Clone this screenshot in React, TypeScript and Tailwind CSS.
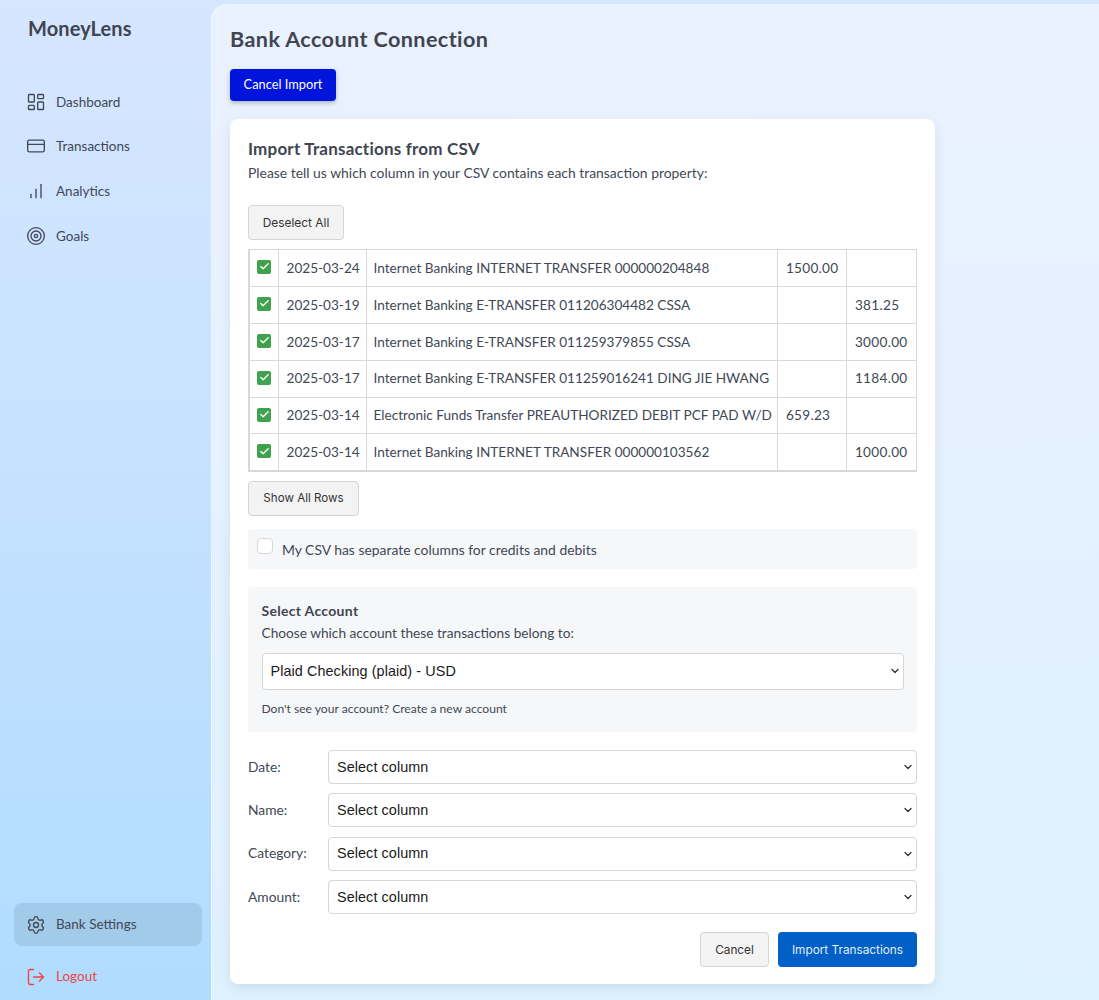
import { LayoutDashboard, CreditCard, Target, Settings, LogOut, ChevronDown, Check } from "lucide-react";

function BarsIcon({ size, strokeWidth }: { size: number; strokeWidth: number }) {
  return (
    <svg width={size} height={size} viewBox="0 0 24 24" fill="none" stroke="currentColor" strokeWidth={strokeWidth} strokeLinecap="round" strokeLinejoin="round">
      <path d="M6 20v-4" />
      <path d="M12 20V10" />
      <path d="M18 20V4" />
    </svg>
  );
}

const nav = [
  { label: "Dashboard", Icon: LayoutDashboard },
  { label: "Transactions", Icon: CreditCard },
  { label: "Analytics", Icon: BarsIcon },
  { label: "Goals", Icon: Target },
];

const rows = [
  ["2025-03-24", "Internet Banking INTERNET TRANSFER 000000204848", "1500.00", ""],
  ["2025-03-19", "Internet Banking E-TRANSFER 011206304482 CSSA", "", "381.25"],
  ["2025-03-17", "Internet Banking E-TRANSFER 011259379855 CSSA", "", "3000.00"],
  ["2025-03-17", "Internet Banking E-TRANSFER 011259016241 DING JIE HWANG", "", "1184.00"],
  ["2025-03-14", "Electronic Funds Transfer PREAUTHORIZED DEBIT PCF PAD W/D", "659.23", ""],
  ["2025-03-14", "Internet Banking INTERNET TRANSFER 000000103562", "", "1000.00"],
];

function NativeLikeSelect({ value, className }: { value: string; className: string }) {
  return (
    <div className={`relative ${className}`}>
      <select
        defaultValue={value}
        className="h-full w-full appearance-none rounded-[4px] border border-[#d5d5d5] bg-white px-2 pt-[1px] font-['Liberation_Sans',sans-serif] text-[14.4px] tracking-[0.08px] text-[#1a1a1a]"
      >
        <option>{value}</option>
      </select>
      <ChevronDown size={12} strokeWidth={2.6} className="pointer-events-none absolute right-[3px] top-1/2 -translate-y-1/2 text-[#333]" />
    </div>
  );
}

function Field({ label }: { label: string }) {
  return (
    <div className="flex h-[34px] items-center">
      <span className="w-[80px] text-[13.8px] text-[#414855]">{label}</span>
      <NativeLikeSelect value="Select column" className="h-full flex-1" />
    </div>
  );
}

export default function App() {
  return (
    <div className="flex h-[1000px] overflow-hidden bg-gradient-to-b from-[#d7e6ff] to-[#b0dcff] font-['Lato',sans-serif] text-[#414855]">
      <aside className="flex w-[211px] shrink-0 flex-col pl-[14px] pr-[9px]">
        <div className="mb-[39.2px] mt-[15px] px-[14px] text-[20px] font-bold leading-[26px] tracking-[0.1px] text-[#3f4551]">MoneyLens</div>
        <nav className="flex flex-col gap-[1.7px]">
          {nav.map(({ label, Icon }) => (
            <div key={label} className="flex h-[43px] items-center gap-[10px] px-[12px] text-[13.5px]">
              <Icon size={20} strokeWidth={1.6} />
              <span>{label}</span>
            </div>
          ))}
        </nav>
        <div className="mt-auto flex h-[43px] items-center gap-[10px] rounded-[8px] bg-[#a2cbe9] px-[12px] text-[13.5px]">
          <Settings size={20} strokeWidth={1.6} />
          <span>Bank Settings</span>
        </div>
        <div className="mb-[2px] mt-[9px] flex h-[43px] items-center gap-[10px] px-[12px] text-[13.5px] text-[#ef4444]">
          <LogOut size={20} strokeWidth={1.6} />
          <span>Logout</span>
        </div>
      </aside>

      <main className="mt-[4px] flex-1 rounded-tl-[16px] border-l border-t border-[#f0f6ff] bg-gradient-to-b from-[#eaf1ff] to-[#def1ff] pl-[18px] pt-[19px]">
        <h1 className="text-[21.6px] font-bold leading-[30px] tracking-[0.4px] text-[#3f4551]">Bank Account Connection</h1>
        <button className="mt-[15px] block h-[32px] w-[106px] rounded-[4px] bg-[#0014dc] text-[12.8px] text-white shadow-[0_2px_4px_rgba(0,0,0,0.25)]">Cancel Import</button>

        <section className="mt-[18px] h-[865px] w-[705px] rounded-[8px] bg-white px-[18px] pt-[18px] shadow-[0_4px_12px_rgba(0,0,0,0.08)]">
          <h2 className="text-[17px] font-bold leading-[24px] tracking-[0.2px] text-[#3f4551]">Import Transactions from CSV</h2>
          <p className="mt-[2px] text-[13.9px] leading-[20px]">Please tell us which column in your CSV contains each transaction property:</p>

          <button className="mt-[22px] block h-[35px] w-[96px] rounded-[4px] border border-[#d5d5d5] bg-[#f3f3f3] font-['Inter',sans-serif] text-[11.9px] text-[#333]">Deselect All</button>

          <table className="mt-[9px] w-[669px] table-fixed border-collapse border-2 border-t border-r border-[#d8d8d8] text-[13.6px]">
            <colgroup>
              <col className="w-[29px]" />
              <col className="w-[88px]" />
              <col className="w-[411px]" />
              <col className="w-[69px]" />
              <col className="w-[70px]" />
            </colgroup>
            <tbody>
              {rows.map((r, i) => (
                <tr key={i} className="h-[36.9px]">
                  <td className="border border-[#d8d8d8] pl-[7px]">
                    <span className="-mt-[2px] flex h-[14px] w-[14px] items-center justify-center rounded-[2px] bg-[#3fa34d]">
                      <Check size={11} strokeWidth={3} className="text-white" />
                    </span>
                  </td>
                  <td className="whitespace-nowrap border border-[#d8d8d8] px-[8px]">{r[0]}</td>
                  <td className="whitespace-nowrap border border-[#d8d8d8] px-[7px]">{r[1]}</td>
                  <td className="border border-[#d8d8d8] px-[8px] tracking-[0.3px]">{r[2]}</td>
                  <td className="border border-[#d8d8d8] px-[8px] tracking-[0.3px]">{r[3]}</td>
                </tr>
              ))}
            </tbody>
          </table>

          <button className="mt-[9px] block h-[35px] w-[111px] rounded-[4px] border border-[#d5d5d5] bg-[#f3f3f3] font-['Inter',sans-serif] text-[11.6px] text-[#333]">Show All Rows</button>

          <div className="mt-[13px] flex h-[40px] items-start rounded-[4px] bg-[#f6f7f9] pl-[9px] pt-[9px]">
            <span className="h-[16px] w-[16px] rounded-[4px] border border-[#d8d8d8] bg-white" />
            <span className="ml-[9px] mt-[2px] text-[13.9px] leading-[20px]">My CSV has separate columns for credits and debits</span>
          </div>

          <div className="mt-[18px] h-[145px] rounded-[4px] bg-[#f6f7f9] px-[13.5px] pt-[14px]">
            <div className="text-[14px] font-bold leading-[20px] tracking-[0.3px] text-[#3f4551]">Select Account</div>
            <div className="mt-[2px] text-[13.7px] leading-[20px]">Choose which account these transactions belong to:</div>
            <NativeLikeSelect value="Plaid Checking (plaid) - USD" className="mt-[10px] h-[37px]" />
            <div className="mt-[11px] text-[12.1px] leading-[16px]">Don't see your account? Create a new account</div>
          </div>

          <div className="mt-[18px] flex flex-col gap-[9.35px]">
            {["Date:", "Name:", "Category:", "Amount:"].map((l) => (
              <Field key={l} label={l} />
            ))}
          </div>

          <div className="mt-[18.5px] flex justify-end gap-[9px]">
            <button className="flex h-[35px] w-[69px] items-center justify-center rounded-[4px] border border-[#d5d5d5] bg-[#f3f3f3] pt-[2px] font-['Inter',sans-serif] text-[11.8px] text-[#333]">Cancel</button>
            <button className="flex h-[35px] w-[139px] items-center justify-center rounded-[4px] bg-[#0060c7] pt-[2px] font-['Inter',sans-serif] text-[11.8px] text-[#e4eefb]">Import Transactions</button>
          </div>
        </section>
      </main>
    </div>
  );
}
